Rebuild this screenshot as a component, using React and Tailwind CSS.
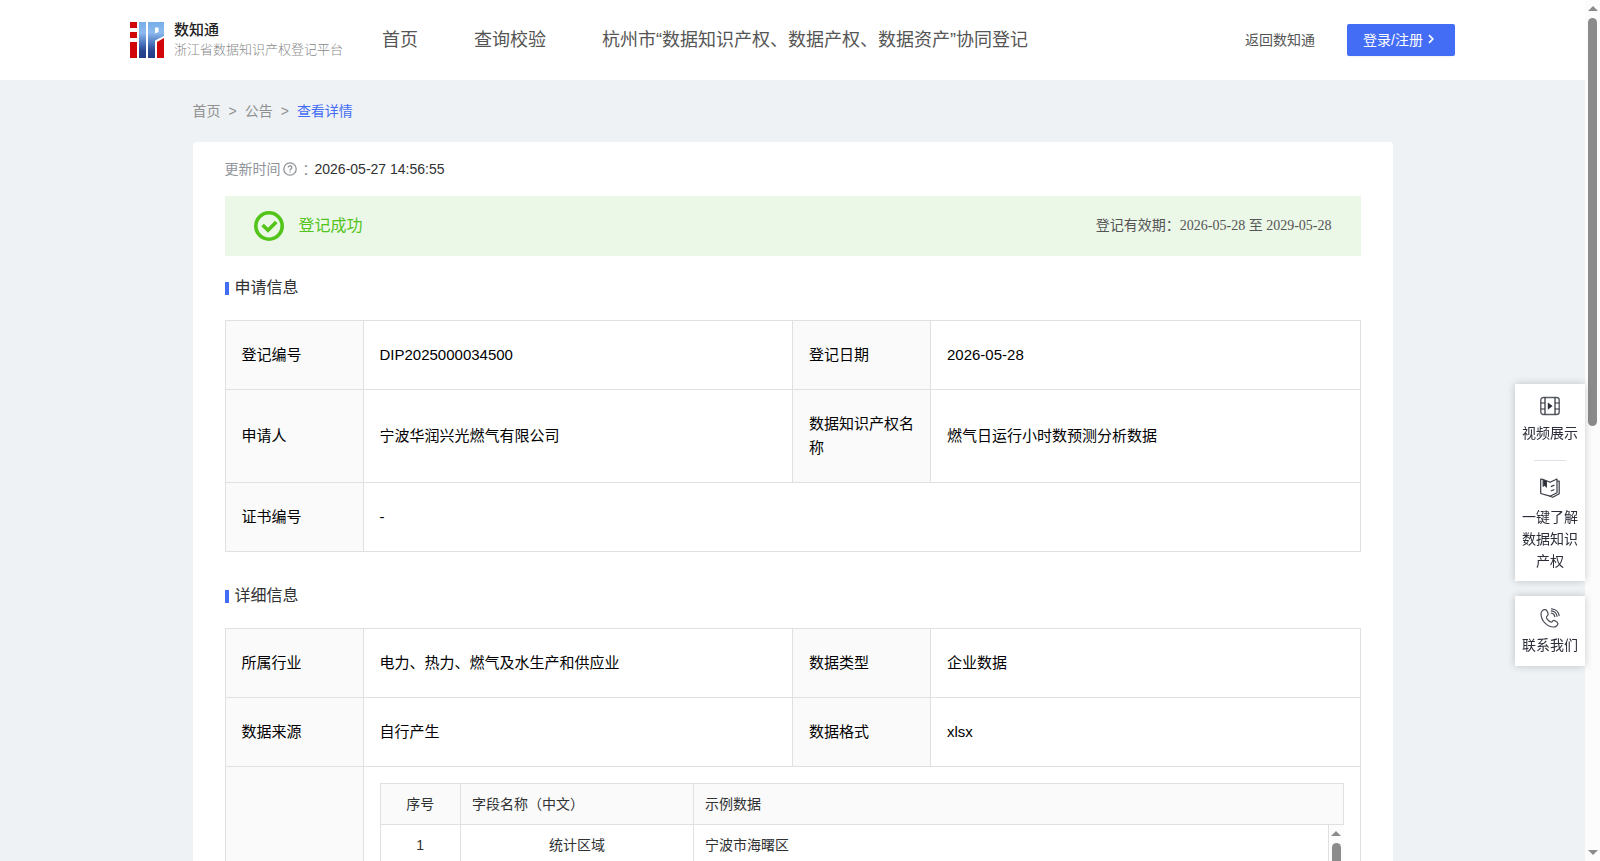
import React from 'react';

const navItems = ['首页', '查询校验', '杭州市“数据知识产权、数据产权、数据资产”协同登记'];

const fieldRows = [{ index: 1, name: '统计区域', sample: '宁波市海曙区' }];

const Logo = () => (
  <svg width="34" height="36" viewBox="0 0 34 36" aria-hidden="true">
    <defs>
      <linearGradient id="logoBlue" x1="0" y1="0" x2="0" y2="36" gradientUnits="userSpaceOnUse">
        <stop offset="0" stopColor="#76aee8" />
        <stop offset="0.3" stopColor="#8cbaee" />
        <stop offset="0.6" stopColor="#4a73bd" />
        <stop offset="0.8" stopColor="#2b4692" />
        <stop offset="1" stopColor="#263c86" />
      </linearGradient>
    </defs>
    <path d="M0 0h7v6H0zM0 10h7v6H0zM0 20h7v16H0z" fill="#d0060a" />
    <path d="M9 0h7v36H9z" fill="url(#logoBlue)" />
    <path fillRule="evenodd" d="M18 0h16v14l-9 4.500v17.500h-7zM25 5.500v6l3.500-1.500v-4.500z" fill="url(#logoBlue)" />
    <path d="M27 20l7-4v20h-7z" fill="#d0060a" />
  </svg>
);

const HelpIcon = () => (
  <svg width="14" height="14" viewBox="0 0 14 14" fill="none" stroke="#909399" strokeWidth="1.3" aria-hidden="true">
    <circle cx="7" cy="7" r="6.200" />
    <path d="M5.200 5.600a1.800 1.800 0 1 1 2.600 1.600c-.6.3-.8.600-.8 1.200" />
    <path d="M7 9.400v1.200" />
  </svg>
);

const SuccessIcon = () => (
  <svg width="30" height="30" viewBox="0 0 30 30" fill="none" stroke="#52c41a" aria-hidden="true">
    <circle cx="15" cy="15" r="13.200" strokeWidth="3.600" />
    <path d="M8.600 14l5.400 5.200 8.300-8.300" strokeWidth="3.600" />
  </svg>
);

const ArrowIcon = () => (
  <svg width="16" height="16" viewBox="0 0 16 16" fill="none" stroke="#fff" strokeWidth="1.700" aria-hidden="true">
    <path d="M6 3.200l3.800 3.800L6 10.800" />
  </svg>
);

const VideoIcon = () => (
  <svg width="20" height="20" viewBox="0 0 20 20" fill="none" stroke="#2b2d38" strokeWidth="1.200" aria-hidden="true">
    <rect x="0.800" y="1.500" width="18.400" height="17" rx="2.500" stroke="#5a5c66" strokeWidth="1.400" />
    <path d="M5 1.500v17M15 1.500v17" />
    <path d="M.8 7H5M.8 13H5M15 7h4.200M15 13h4.200" />
    <path d="M7.800 6.500v7.200l4.800-3.600z" fill="#2b2d38" stroke="none" />
  </svg>
);

const BookIcon = () => (
  <svg width="20" height="20" viewBox="0 0 20 20" fill="none" stroke="#3a3c46" strokeWidth="1.200" strokeLinejoin="round" aria-hidden="true">
    <path d="M3 1.400L.7 1v14.500l9.300 2.700 7-3.400V1L10 4.300 6.500 2.800" />
    <path d="M17.200 3.200h2v12.600l-6.400 3.500-3-1" />
    <path d="M3.200 1.500v6.700L4.800 7l1.600 2V2.800z" fill="#2b2d38" />
    <path d="M10.800 8.600l3.600-1.500M10.800 13l3.600-1.500" />
  </svg>
);

const PhoneIcon = () => (
  <svg width="20" height="20" viewBox="0 0 20 20" fill="none" stroke="#4a4c56" strokeWidth="1.200" strokeLinecap="round" strokeLinejoin="round" aria-hidden="true">
    <path d="M5.500 1.600C3.200 1.200 1 3.200 1 6c0 6.500 6.200 13 12.300 13 2.600 0 4.700-1.600 4.600-3.600 0-1.200-3.400-3.200-4.500-2.900-1 .3-1 1.500-2 1.600C9.500 14 6.500 11 6.400 9.200c0-1.100 1.500-1.500 1.700-2.500C8.300 5.400 7 2 5.500 1.600z" />
    <path d="M11.200 5c2 .3 3.300 1.700 3.600 3.700M11.300 2.800c3 .2 5.400 2.600 5.700 5.500M11.500.8c4.200.2 7.200 3 7.600 6.800" />
  </svg>
);

const ScrollBar = ({ thumb, end }) => (
  <div className="flex w-[15px] shrink-0 flex-col items-center bg-[#fcfcfc] py-1.5" aria-hidden="true">
    <div className="border-x-[5px] border-b-[5px] border-x-transparent border-b-[#8b8b8b]" />
    <div className={`mt-[7px] w-[9px] rounded-full bg-[#8b8b8b] ${thumb}`} />
    {end && <div className="mt-auto border-x-[5px] border-t-[5px] border-x-transparent border-t-[#8b8b8b]" />}
  </div>
);

const SectionTitle = ({ children }) => (
  <h2 className="flex h-6 items-center gap-1.5 text-base text-[#303133]">
    <span className="h-[13px] w-1 bg-[#446df6]" />
    {children}
  </h2>
);

const Label = ({ children }) => (
  <th scope="row" className="border border-[#e0e0e0] bg-[#fafafa] px-4 py-[22px] text-left font-normal">
    {children}
  </th>
);

const Value = ({ children, colSpan }) => (
  <td colSpan={colSpan} className="border border-[#e0e0e0] px-4 py-[22px]">
    {children}
  </td>
);

const InfoTable = ({ children }) => (
  <table className="mt-5 w-full table-fixed border-collapse text-[15px] leading-6 text-black">
    <colgroup>
      <col className="w-[138px]" />
      <col />
      <col className="w-[138px]" />
      <col />
    </colgroup>
    <tbody>{children}</tbody>
  </table>
);

const FieldTable = () => (
  <div className="text-sm text-[#303133]">
    <div className="border border-[#e0e0e0] bg-[#fafafa]">
      <table className="w-full table-fixed">
        <colgroup>
          <col className="w-20" />
          <col className="w-[233px]" />
          <col />
        </colgroup>
        <thead>
          <tr className="h-10">
            <th className="border-r border-[#e0e0e0] font-normal">序号</th>
            <th className="border-r border-[#e0e0e0] px-[11px] text-left font-normal">字段名称（中文）</th>
            <th className="px-[11px] text-left font-normal">示例数据</th>
          </tr>
        </thead>
      </table>
    </div>
    <div className="flex h-[400px]">
      <div className="min-w-0 flex-1 border-x border-[#e0e0e0]">
        <table className="w-full table-fixed">
          <colgroup>
            <col className="w-20" />
            <col className="w-[233px]" />
            <col />
          </colgroup>
          <tbody>
            {fieldRows.map((row) => (
              <tr key={row.index} className="h-[41px] border-b border-[#e0e0e0] text-center">
                <td className="border-r border-[#e0e0e0]">{row.index}</td>
                <td className="border-r border-[#e0e0e0] px-[11px]">{row.name}</td>
                <td className="px-[11px] text-left">{row.sample}</td>
              </tr>
            ))}
          </tbody>
        </table>
      </div>
      <ScrollBar thumb="h-40" />
    </div>
  </div>
);

const Header = () => (
  <header className="flex h-20 items-center bg-white px-[130px] text-[#555]">
    <a href="#" className="flex items-center gap-2.5">
      <Logo />
      <span className="flex w-[172px] flex-col whitespace-nowrap">
        <span className="text-[15px] leading-5 font-medium text-[#222]">数知通</span>
        <span className="text-[13px] leading-5 font-light text-[#888]">浙江省数据知识产权登记平台</span>
      </span>
    </a>
    <nav className="ml-9 flex gap-14 whitespace-nowrap text-lg">
      {navItems.map((item) => (
        <a key={item} href="#">
          {item}
        </a>
      ))}
    </nav>
    <div className="ml-auto flex items-center gap-8 whitespace-nowrap text-sm">
      <a href="#">返回数知通</a>
      <button type="button" className="flex h-8 items-center rounded-xs bg-[#446df6] px-4 text-white shadow-xs">
        登录/注册
        <ArrowIcon />
      </button>
    </div>
  </header>
);

const SideTools = () => (
  <aside className="fixed top-[384px] right-[15px] flex w-[70px] flex-col gap-[15px] text-center text-sm leading-[22px] text-[#2b2d38]">
    <div className="flex flex-col items-center bg-white px-[7px] pt-3 pb-[9px] shadow-[0_0_8px_rgba(0,0,0,0.2)]">
      <a href="#" className="flex flex-col items-center gap-1.5">
        <VideoIcon />
        视频展示
      </a>
      <hr className="my-4 w-8 border-[#dcdfe6]" />
      <a href="#" className="flex flex-col items-center gap-2 pt-px">
        <BookIcon />
        一键了解数据知识产权
      </a>
    </div>
    <div className="bg-white px-[7px] pt-3 pb-2.5 shadow-[0_0_8px_rgba(0,0,0,0.2)]">
      <a href="#" className="flex flex-col items-center gap-1.5">
        <PhoneIcon />
        联系我们
      </a>
    </div>
  </aside>
);

const App = () => {
  return (
    <div className="flex h-screen overflow-hidden bg-[#eef2f5] font-['Liberation_Sans','Noto_Sans_CJK_SC',sans-serif]">
      <div className="min-w-0 flex-1 overflow-hidden">
        <Header />
        <main className="mx-auto max-w-[1200px]">
          <nav className="flex h-[62px] items-center gap-2 text-sm text-[#909090]">
            <a href="#">首页</a>
            <span>&gt;</span>
            <a href="#">公告</a>
            <span>&gt;</span>
            <a href="#" className="text-[#446df6]">
              查看详情
            </a>
          </nav>

          <div className="rounded-t bg-white px-8 pt-[15px]">
            <div className="flex h-6 items-center text-sm text-[#909399]">
              <span className="mr-0.5">更新时间</span>
              <HelpIcon />
              <span className="ml-1.5 w-3">：</span>
              <span className="text-[#303133]">2026-05-27 14:56:55</span>
            </div>

            <div className="mt-[15px] flex h-[60px] items-center bg-[#ebf7e7] px-[29px]">
              <SuccessIcon />
              <span className="ml-[15px] text-base text-[#52c41a]">登记成功</span>
              <span className="ml-auto font-['Liberation_Serif','Noto_Sans_CJK_SC',serif] text-sm text-[#555]">
                登记有效期：2026-05-28 至 2029-05-28
              </span>
            </div>

            <section className="mt-5">
              <SectionTitle>申请信息</SectionTitle>
              <InfoTable>
                <tr>
                  <Label>登记编号</Label>
                  <Value>DIP2025000034500</Value>
                  <Label>登记日期</Label>
                  <Value>2026-05-28</Value>
                </tr>
                <tr>
                  <Label>申请人</Label>
                  <Value>宁波华润兴光燃气有限公司</Value>
                  <Label>数据知识产权名称</Label>
                  <Value>燃气日运行小时数预测分析数据</Value>
                </tr>
                <tr>
                  <Label>证书编号</Label>
                  <Value colSpan={3}>-</Value>
                </tr>
              </InfoTable>
            </section>

            <section className="mt-8">
              <SectionTitle>详细信息</SectionTitle>
              <InfoTable>
                <tr>
                  <Label>所属行业</Label>
                  <Value>电力、热力、燃气及水生产和供应业</Value>
                  <Label>数据类型</Label>
                  <Value>企业数据</Value>
                </tr>
                <tr>
                  <Label>数据来源</Label>
                  <Value>自行产生</Value>
                  <Label>数据格式</Label>
                  <Value>xlsx</Value>
                </tr>
                <tr>
                  <Label />
                  <td colSpan={3} className="border border-[#e0e0e0] p-4">
                    <FieldTable />
                  </td>
                </tr>
              </InfoTable>
            </section>
          </div>
        </main>
      </div>
      <SideTools />
      <ScrollBar thumb="h-[48%]" end />
    </div>
  );
};

export default App;
